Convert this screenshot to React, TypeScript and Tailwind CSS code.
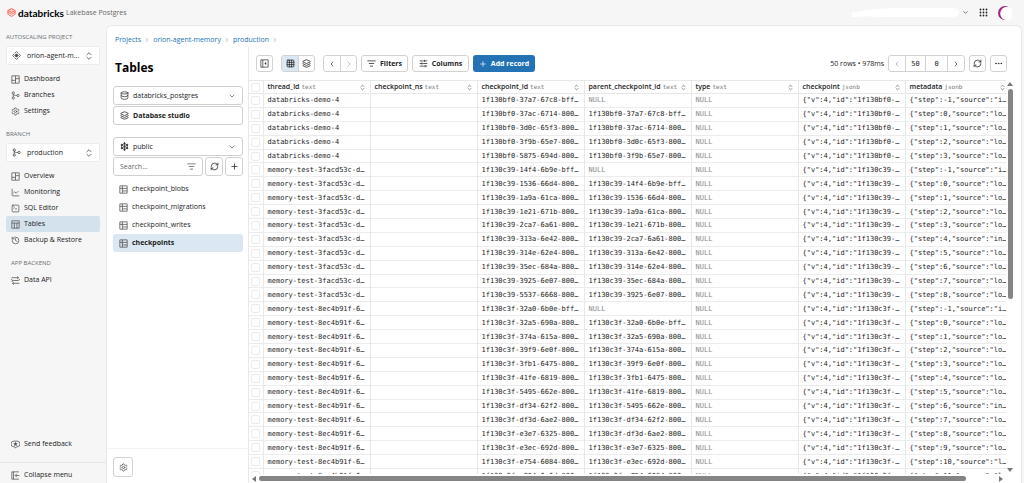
import type { ComponentType, ReactNode } from "react"
import {
  ChartLine,
  ChevronDown,
  ChevronLeft,
  ChevronRight,
  ChevronsUpDown,
  Database,
  Ellipsis,
  Grid3x3,
  History,
  Layers,
  ListFilter,
  Plus,
  RefreshCw,
  Settings,
  SlidersHorizontal,
  SquareTerminal,
} from "lucide-react"

type IconProps = { className?: string; strokeWidth?: number }
type IconType = ComponentType<IconProps>

function Glyph({ className = "", children }: { className?: string; children: ReactNode }) {
  return (
    <svg viewBox="0 0 16 16" fill="none" stroke="currentColor" strokeWidth="1.4" className={className}>
      {children}
    </svg>
  )
}

function BranchIcon({ className }: IconProps) {
  return (
    <Glyph className={className}>
      <circle cx="4" cy="3.5" r="2" />
      <circle cx="4" cy="12.5" r="2" />
      <circle cx="12.5" cy="8" r="2" />
      <path d="M4 5.500v5M4 5.500c0 1.500 2 2.500 6.500 2.500" />
    </Glyph>
  )
}

function ProjectIcon({ className }: IconProps) {
  return (
    <Glyph className={className}>
      <path d="M8 5l3 3-3 3-3-3z" fill="currentColor" />
      <path d="M5 4l3-3 3 3M5 12l3 3 3-3M4 5L1 8l3 3M12 5l3 3-3 3" />
    </Glyph>
  )
}

function DashboardIcon({ className }: IconProps) {
  return (
    <Glyph className={className}>
      <path d="M1.500 1.500h13v13h-13zM8 1.500v13M1.500 9.500H8M8 6.500h6.500" />
    </Glyph>
  )
}

function TableIcon({ className }: IconProps) {
  return (
    <Glyph className={className}>
      <path d="M1.500 1.500h13v13h-13zM1.500 5.500h13M6 5.500v9M10.500 5.500v9" />
    </Glyph>
  )
}

function TableItemIcon({ className }: IconProps) {
  return (
    <Glyph className={className}>
      <path d="M1.500 1.500h13v13h-13zM1.500 6h13M6 1.500v13M6 10.500h8.500" />
    </Glyph>
  )
}

function ApiIcon({ className }: IconProps) {
  return (
    <Glyph className={className}>
      <path d="M1 3h12M11 1l2.500 2L11 5M13 8H4a2.500 2.500 0 00-2.500 2.500M3 8a2.500 2.500 0 01-2-2.500M15 13H3M5 11l-2.500 2L5 15M13 8a2.500 2.500 0 002-2.500" />
    </Glyph>
  )
}

function CollapseIcon({ className }: IconProps) {
  return (
    <Glyph className={className}>
      <path d="M6 1.500H1.500v13H6M4.500 1.500v13M6 1.500h8M6 14.500h8M15 8H7.500M10.500 5l-3 3 3 3" />
    </Glyph>
  )
}

function PanelToggleIcon({ className }: IconProps) {
  return (
    <Glyph className={className}>
      <path d="M1.500 1.500h13v13h-13zM5 1.500v13" strokeWidth="1.2" />
      <path d="M11 5.500v5L8 8z" fill="currentColor" stroke="none" />
    </Glyph>
  )
}

function SchemaIcon({ className }: IconProps) {
  return (
    <Glyph className={className}>
      <path d="M8 3v10M3.500 5.500l9 5M12.500 5.500l-9 5" />
      <path d="M8 2.500l5 2.800v5.400l-5 2.800-5-2.800V5.300z" />
      <g fill="currentColor">
        <circle cx="8" cy="2" r="1" />
        <circle cx="8" cy="14" r="1" />
        <circle cx="3" cy="5" r="1" />
        <circle cx="13" cy="5" r="1" />
        <circle cx="3" cy="11" r="1" />
        <circle cx="13" cy="11" r="1" />
      </g>
    </Glyph>
  )
}

function FeedbackIcon({ className }: IconProps) {
  return (
    <Glyph className={className}>
      <path d="M5 2h6a4.500 4.500 0 010 10h-1l-2 2.500L6 12H5A4.500 4.500 0 015 2z" />
      <path d="M8 3l1.200 2.600 2.800.3-2.100 1.900.6 2.800L8 9.200l-2.500 1.400.6-2.800L4 5.900l2.800-.3z" fill="currentColor" stroke="none" />
    </Glyph>
  )
}

function BrandMark() {
  return (
    <svg viewBox="0 0 16 16" fill="none" stroke="#ff5a47" strokeWidth="1.5" className="size-[9px]">
      <path d="M1.500 4.500L8 1l6.500 3.500L8 8z" fill="#ffc9c2" />
      <path d="M1.500 4.500v3L8 11l6.500-3.500v-3M1.500 7.500v3.500L8 15l6.500-4V7.500" />
    </svg>
  )
}

function NavItem({ icon: Icon, label, active }: { icon: IconType; label: string; active?: boolean }) {
  return (
    <a
      href="#"
      className={`flex h-4 items-center gap-1 rounded-xs pl-[5px] ${active ? "bg-[#d4e2ee]" : ""}`}
    >
      <Icon className="size-[9px] text-[#555]" strokeWidth={2} />
      {label}
    </a>
  )
}

function NavHeading({ children, className = "" }: { children: ReactNode; className?: string }) {
  return <h2 className={`text-[6px] leading-2 text-[#6b6f73] uppercase ${className}`}>{children}</h2>
}

function Switcher({ icon: Icon, label }: { icon: IconType; label: string }) {
  return (
    <button className="flex h-[19px] w-full items-center rounded-xs border border-[#ececec] bg-white pr-[5px] pl-[5px]">
      <Icon className="mr-[6px] size-[9px] text-[#444]" />
      <span className="flex-1 truncate text-left">{label}</span>
      <ChevronsUpDown className="size-[10px] text-[#555]" />
    </button>
  )
}

function PickerButton({ icon: Icon, label }: { icon: IconType; label: string }) {
  return (
    <button className="flex h-[19px] w-full items-center gap-1 rounded-[3px] border border-[#cfcfcf] bg-white px-[6px]">
      <Icon className="size-[9px] text-[#333]" />
      <span className="flex-1 text-left">{label}</span>
      <ChevronDown className="size-2 text-[#555]" />
    </button>
  )
}

const box = "flex items-center justify-center rounded-[3px] border border-[#d2d2d2] bg-white"

const schemaTables = ["checkpoint_blobs", "checkpoint_migrations", "checkpoint_writes", "checkpoints"]

const columns = [
  ["thread_id", "text"],
  ["checkpoint_ns", "text"],
  ["checkpoint_id", "text"],
  ["parent_checkpoint_id", "text"],
  ["type", "text"],
  ["checkpoint", "jsonb"],
  ["metadata", "jsonb"],
]

const threads = [
  {
    id: "databricks-demo-4",
    prefix: "1f130bf0",
    inputStep: -1,
    checkpoints: ["37a7-67c8-bff", "37ac-6714-800", "3d0c-65f3-800", "3f9b-65e7-800", "5875-694d-800"],
  },
  {
    id: "memory-test-3facd53c-d…",
    prefix: "1f130c39",
    inputStep: 4,
    checkpoints: [
      "14f4-6b9e-bff", "1536-66d4-800", "1a9a-61ca-800", "1e21-671b-800", "2ca7-6a61-800",
      "313a-6e42-800", "314e-62e4-800", "35ec-684a-800", "3925-6e07-800", "5537-6668-800",
    ],
  },
  {
    id: "memory-test-8ec4b91f-6…",
    prefix: "1f130c3f",
    inputStep: 6,
    checkpoints: [
      "32a0-6b0e-bff", "32a5-690a-800", "374a-615a-800", "39f9-6e0f-800", "3fb1-6475-800",
      "41fe-6819-800", "5495-662e-800", "df34-62f2-800", "df3d-6ae2-800", "e3e7-6325-800",
      "e3ec-692d-800", "e754-6084-800", "e994-6a6d-800",
    ],
  },
]

const rows = threads.flatMap((t) =>
  t.checkpoints.map((c, i) => {
    const step = i - 1
    const source = step === -1 || step === t.inputStep ? "in" : "lo"
    // the cell has room for one letter less when the step takes two characters
    const shown = step < 0 || step > 9 ? source[0] : source
    return [
      t.id,
      "",
      `${t.prefix}-${c}…`,
      i === 0 ? "NULL" : `${t.prefix}-${t.checkpoints[i - 1]}…`,
      "NULL",
      `{"v":4,"id":"${t.prefix}-…`,
      `{"step":${step},"source":"${shown}…`,
    ]
  }),
)

function Sidebar() {
  return (
    <aside className="flex w-[106px] shrink-0 flex-col pt-2">
      <nav className="flex flex-1 flex-col px-[6px]">
        <NavHeading>Autoscaling project</NavHeading>
        <div className="mt-[5px] mb-[6px]">
          <Switcher icon={ProjectIcon} label="orion-agent-m..." />
        </div>
        <NavItem icon={DashboardIcon} label="Dashboard" />
        <NavItem icon={BranchIcon} label="Branches" />
        <NavItem icon={Settings} label="Settings" />
        <NavHeading className="mt-[11px]">Branch</NavHeading>
        <div className="mt-[5px] mb-[6px]">
          <Switcher icon={BranchIcon} label="production" />
        </div>
        <NavItem icon={DashboardIcon} label="Overview" />
        <NavItem icon={ChartLine} label="Monitoring" />
        <NavItem icon={SquareTerminal} label="SQL Editor" />
        <NavItem icon={TableIcon} label="Tables" active />
        <NavItem icon={History} label="Backup & Restore" />
        <NavHeading className="mt-[11px] pl-[5px]">App backend</NavHeading>
        <div className="mt-[5px]">
          <NavItem icon={ApiIcon} label="Data API" />
        </div>
        <div className="mt-auto mb-[10px]">
          <NavItem icon={FeedbackIcon} label="Send feedback" />
        </div>
      </nav>
      <div className="border-t border-[#e6e6e6] px-[6px] pt-1">
        <NavItem icon={CollapseIcon} label="Collapse menu" />
      </div>
    </aside>
  )
}

function TablesPanel() {
  return (
    <section className="flex w-[141px] shrink-0 flex-col pr-[5px] pl-[6px]">
      <h1 className="mt-[11px] pl-[2px] text-[12px] leading-5 font-bold text-black">Tables</h1>
      <div className="mt-2 flex flex-col gap-px">
        <PickerButton icon={Database} label="databricks_postgres" />
        <button className="flex h-[19px] items-center gap-1 rounded-[3px] border border-[#cfcfcf] px-[6px] font-bold">
          <Layers className="size-[9px]" />
          Database studio
        </button>
      </div>
      <div className="mt-3 flex flex-col gap-px">
        <PickerButton icon={SchemaIcon} label="public" />
        <div className="flex gap-[2px]">
          <label className="flex h-[19px] min-w-0 flex-1 items-center rounded-[3px] border border-[#cfcfcf] px-[6px]">
            <input aria-label="Search tables" placeholder="Search..." className="w-full min-w-0 outline-none placeholder:text-[#666]" />
            <ListFilter className="size-[9px] shrink-0 text-[#555]" />
          </label>
          <button aria-label="Refresh tables" className={`${box} h-[19px] w-[18px]`}>
            <RefreshCw className="size-[9px]" />
          </button>
          <button aria-label="New table" className={`${box} h-[19px] w-[18px]`}>
            <Plus className="size-[9px]" />
          </button>
        </div>
      </div>
      <ul className="mt-1">
        {schemaTables.map((name) => (
          <li key={name}>
            <a
              href="#"
              className={`flex h-[18px] items-center gap-1 rounded-[3px] pl-[6px] ${
                name === "checkpoints" ? "bg-[#dbe7f3] font-bold" : ""
              }`}
            >
              <TableItemIcon className="size-[9px] text-[#555]" />
              {name}
            </a>
          </li>
        ))}
      </ul>
      <div className="-mr-[5px] -ml-[6px] mt-auto border-t border-[#f4f4f4] pt-2 pb-[6px] pl-[6px]">
        <button aria-label="Table settings" className={`${box} size-5`}>
          <Settings className="size-[9px] text-[#555]" />
        </button>
      </div>
    </section>
  )
}

function Toolbar() {
  return (
    <div className="flex h-[33px] shrink-0 items-center pr-[14px] pl-[7px] text-[#222]">
      <button aria-label="Toggle panel" className={`${box} mr-2 h-[17px] w-[17px]`}>
        <PanelToggleIcon className="size-[9px]" />
      </button>
      <div className={`${box} mr-2 h-[17px] overflow-hidden`}>
        <button aria-label="Grid view" className="flex h-full w-4 items-center justify-center bg-[#dbe7f3]">
          <Grid3x3 className="size-[9px]" />
        </button>
        <button aria-label="Structure view" className="flex h-full w-4 items-center justify-center border-l border-[#d2d2d2]">
          <Layers className="size-[9px]" />
        </button>
      </div>
      <div className={`${box} mr-1 h-[17px]`}>
        <button aria-label="Back" className="flex h-full w-4 items-center justify-center">
          <ChevronLeft className="size-2" />
        </button>
        <button aria-label="Forward" className="flex h-full w-4 items-center justify-center border-l border-[#d2d2d2] text-[#999]">
          <ChevronRight className="size-2" />
        </button>
      </div>
      <button className={`${box} mr-1 h-[17px] w-[47px] gap-1 font-bold`}>
        <ListFilter className="size-[9px]" />
        Filters
      </button>
      <button className={`${box} mr-1 h-[17px] w-[57px] gap-1 font-bold`}>
        <SlidersHorizontal className="size-[9px]" />
        Columns
      </button>
      <button className="flex h-[17px] w-[62px] items-center justify-center gap-1 rounded-[3px] bg-[#2272b4] font-bold text-white">
        <Plus className="size-2" />
        Add record
      </button>
      <span className="mr-1 ml-auto">50 rows • 978ms</span>
      <div className={`${box} mr-1 h-[17px]`}>
        <button aria-label="Previous page" className="flex h-full w-4 items-center justify-center text-[#999]">
          <ChevronLeft className="size-2" />
        </button>
        <input aria-label="Page size" defaultValue="50" className="h-full w-[21px] border-x border-[#d2d2d2] text-center font-['DejaVu_Sans_Mono',monospace]" />
        <input aria-label="Offset" defaultValue="0" className="h-full w-[22px] border-r border-[#d2d2d2] text-center font-['DejaVu_Sans_Mono',monospace]" />
        <button aria-label="Next page" className="flex h-full w-4 items-center justify-center">
          <ChevronRight className="size-2" />
        </button>
      </div>
      <button aria-label="Refresh rows" className={`${box} mr-1 h-[17px] w-[17px]`}>
        <RefreshCw className="size-[9px]" />
      </button>
      <button aria-label="More" className={`${box} h-[17px] w-[17px]`}>
        <Ellipsis className="size-[9px]" />
      </button>
    </div>
  )
}

function DataGrid() {
  return (
    <div className="flex min-h-0 flex-1 flex-col pr-[7px]">
      <div className="flex min-h-0 flex-1">
        <div className="min-w-0 flex-1 overflow-hidden">
          <table className="h-[403px] w-full table-fixed border-collapse font-['DejaVu_Sans_Mono',monospace] leading-3">
            <thead>
              <tr className="border-y border-[#e8e8e8]">
                <th className="w-[14px] border-r border-[#e8e8e8] p-0">
                  <input type="checkbox" aria-label="Select all" className="mx-auto block size-[9px] appearance-none rounded-xs border border-[#ececec]" />
                </th>
                {columns.map(([name, type]) => (
                  <th key={name} className="w-[107px] border-r border-[#e8e8e8] py-0 pr-1 pl-1 text-left last:w-auto last:border-r-0 last:pr-0">
                    <div className="flex items-center gap-[2px] font-['Open_Sans',sans-serif] whitespace-nowrap">
                      <span className="font-semibold">{name}</span>
                      <span className="font-['DejaVu_Sans_Mono',monospace] text-[6px] font-normal text-[#777]">{type}</span>
                      <ChevronsUpDown className="ml-auto size-[7px] text-[#444]" />
                    </div>
                  </th>
                ))}
              </tr>
            </thead>
            <tbody>
              {rows.map((row) => (
                <tr key={row[2]} className="border-b border-[#ececec]">
                  <td className="border-r border-[#e8e8e8] p-0">
                    <input type="checkbox" aria-label={`Select ${row[2]}`} className="mx-auto block size-[9px] appearance-none rounded-xs border border-[#ececec]" />
                  </td>
                  {row.map((cell, i) => (
                    <td
                      key={i}
                      className={`border-r border-[#e8e8e8] py-0 pl-1 whitespace-nowrap last:border-r-0 ${
                        cell === "NULL" ? "text-[#8a8a8a]" : ""
                      }`}
                    >
                      {cell}
                    </td>
                  ))}
                </tr>
              ))}
            </tbody>
          </table>
        </div>
        <div className="flex w-2 flex-col items-center py-[2px]">
          <svg viewBox="0 0 6 4" className="h-1 w-[6px] fill-[#777]"><path d="M3 0l3 4H0z" /></svg>
          <div className="mt-[3px] mb-auto h-[210px] w-[5px] rounded-full bg-[#858585]" />
          <svg viewBox="0 0 6 4" className="h-1 w-[6px] fill-[#777]"><path d="M3 4l3-4H0z" /></svg>
        </div>
      </div>
      <div className="flex h-[9px] items-center gap-[3px] pr-[11px] pl-[3px]">
        <svg viewBox="0 0 4 6" className="h-[6px] w-1 fill-[#777]"><path d="M0 3l4-3v6z" /></svg>
        <div className="mr-[30px] h-[5px] flex-1 rounded-full bg-[#858585]" />
        <svg viewBox="0 0 4 6" className="h-[6px] w-1 fill-[#777]"><path d="M4 3L0 0v6z" /></svg>
      </div>
    </div>
  )
}

export default function App() {
  return (
    <div className="flex h-screen flex-col overflow-hidden bg-[#f6f6f6] font-['Open_Sans',sans-serif] text-[7px] leading-3 text-[#222]">
      <header className="flex h-[25px] shrink-0 items-center pr-3 pl-[7px]">
        <BrandMark />
        <span className="ml-[2px] font-['Lato',sans-serif] text-[10px] font-bold text-black">databricks</span>
        <span className="ml-[2px] text-[#666]">Lakebase Postgres</span>
        <svg viewBox="0 0 108 12" className="ml-auto h-3 w-[108px] fill-white">
          <path d="M0 6Q20 1 50 1h50q8 1 7 6-2 4-14 3H30q-10 1-14-1-10 1-16 1z" />
        </svg>
        <ChevronDown className="mr-[10px] ml-[2px] size-[7px]" />
        <svg viewBox="0 0 9 9" className="mr-[10px] size-[9px] fill-[#222]">
          {[1, 4, 7].flatMap((y) => [1, 4, 7].map((x) => <circle key={`${x}${y}`} cx={x + 0.5} cy={y + 0.5} r="0.9" />))}
        </svg>
        <svg viewBox="0 0 14 14" className="size-[14px]">
          <circle cx="7" cy="7" r="7" fill="#a3257f" />
          <circle cx="9" cy="7.5" r="6.8" fill="#fff" />
        </svg>
      </header>
      <div className="flex min-h-0 flex-1">
        <Sidebar />
        <main className="mr-[2px] flex min-w-0 flex-1 flex-col rounded-t-md border border-b-0 border-[#e8e8e8] bg-white">
          <nav aria-label="Breadcrumb" className="flex h-[21px] shrink-0 items-center gap-[3px] pt-[7px] pl-2 text-[#2272b4]">
            <a href="#">Projects</a>
            <ChevronRight className="size-[6px] text-[#777]" />
            <a href="#">orion-agent-memory</a>
            <ChevronRight className="size-[6px] text-[#777]" />
            <a href="#">production</a>
            <ChevronRight className="size-[6px] text-[#777]" />
          </nav>
          <div className="flex min-h-0 flex-1">
            <TablesPanel />
            <section className="flex min-w-0 flex-1 flex-col border-l border-[#e8e8e8]">
              <Toolbar />
              <DataGrid />
            </section>
          </div>
        </main>
      </div>
    </div>
  )
}
